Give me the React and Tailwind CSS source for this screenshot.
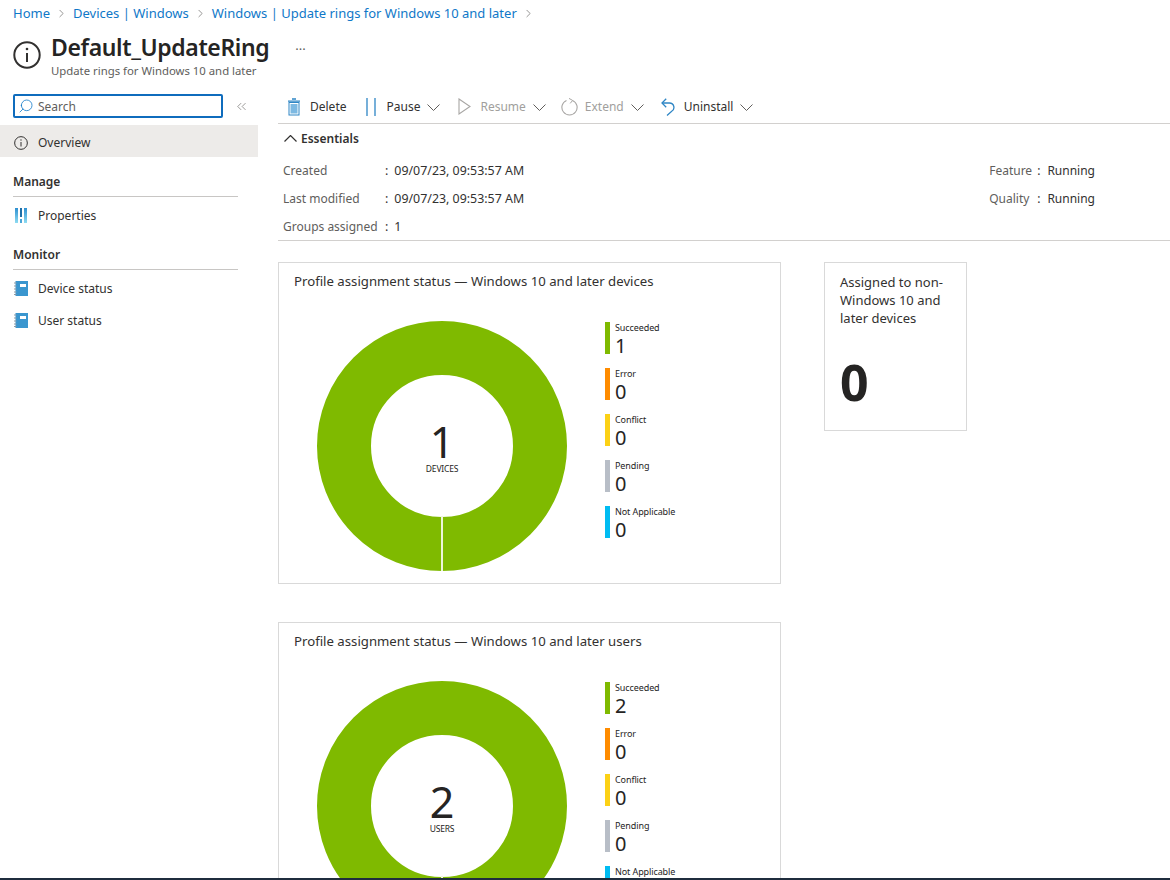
import { ChevronRight, ChevronsLeft, Search } from 'lucide-react';

const crumbs = ['Home', 'Devices | Windows', 'Windows | Update rings for Windows 10 and later'];

function InfoIcon({ size }) {
  return (
    <svg width={size} height={size} viewBox="0 0 28 28" fill="none" stroke="#323130" className="shrink-0">
      <circle cx="14" cy="14" r="12.7" strokeWidth="2" />
      <path d="M14 12v9" strokeWidth="2" />
      <circle cx="14" cy="8" r="1.3" fill="#323130" stroke="none" />
    </svg>
  );
}

function TrashIcon() {
  return (
    <svg width="14" height="18" viewBox="0 0 14 18" className="shrink-0">
      <path d="M5 1h4M1 3.2h12" stroke="#2f86c5" strokeWidth="1.3" fill="none" />
      <rect x="2" y="4.5" width="10" height="12.5" fill="#fff" stroke="#2f86c5" />
      <rect x="3.5" y="6" width="7" height="9.5" fill="#7db9e2" />
    </svg>
  );
}

function PauseIcon() {
  return (
    <svg width="10" height="18" viewBox="0 0 10 18" className="shrink-0">
      <path d="M1 0v18M9 0v18" stroke="#2f86c5" strokeWidth="1.3" />
    </svg>
  );
}

function ResumeIcon() {
  return (
    <svg width="13" height="17" viewBox="0 0 13 17" fill="none" className="shrink-0">
      <path d="M1 1l11 7.5L1 16z" stroke="#a8a6a4" strokeWidth="1.1" />
    </svg>
  );
}

function ExtendIcon() {
  return (
    <svg width="17" height="18" viewBox="0 0 17 18" fill="none" className="shrink-0">
      <path d="M11.5 2.4a7.6 7.6 0 1 1-6 0" stroke="#a8a6a4" strokeWidth="1.1" />
      <path d="M8 0.4l3.6 2-2.4 3" stroke="#a8a6a4" strokeWidth="1" />
    </svg>
  );
}

function UninstallIcon() {
  return (
    <svg width="14" height="18" viewBox="0 0 14 18" fill="none" className="shrink-0">
      <path d="M1 5h7.5a4.4 4.4 0 0 1 2.2 8.2L6 17.4" stroke="#2f86c5" strokeWidth="1.3" />
      <path d="M5.2 0.8L1 5l4.2 4.2" stroke="#2f86c5" strokeWidth="1.3" />
    </svg>
  );
}

function PropertiesIcon() {
  return (
    <svg width="12" height="15" viewBox="0 0 12 15" className="shrink-0">
      <defs>
        <linearGradient id="prop-bar" x1="0" y1="0" x2="0" y2="1">
          <stop offset="0" stopColor="#2d8fd0" />
          <stop offset="1" stopColor="#8fdcf2" />
        </linearGradient>
      </defs>
      <rect x="0" y="0" width="3" height="15" fill="url(#prop-bar)" />
      <rect x="5" y="0" width="2" height="9" fill="#1f6fa8" />
      <rect x="5" y="11" width="2" height="4" fill="#4aa6d8" />
      <rect x="9" y="0" width="3" height="15" fill="url(#prop-bar)" />
    </svg>
  );
}

function BookIcon() {
  return (
    <svg width="14" height="15" viewBox="0 0 14 15" className="shrink-0">
      <rect x="1.5" y="0" width="12.5" height="15" fill="#3a96cf" />
      <rect x="6" y="3" width="6" height="3" fill="#ffffff" />
      <path d="M0 2h2.5M0 5h2.5M0 8h2.5M0 11h2.5M0 13.5h2.5" stroke="#8a98a3" strokeWidth="1" />
    </svg>
  );
}

function DownChevron() {
  return (
    <svg width="13" height="7" viewBox="0 0 13 7" fill="none" className="ml-[7px] mt-[2px] shrink-0">
      <path d="M0.5 0.5l6 6 6-6" stroke="#605e5c" strokeWidth="1" />
    </svg>
  );
}

function UpChevron() {
  return (
    <svg width="13" height="7" viewBox="0 0 13 7" fill="none" className="shrink-0">
      <path d="M0.5 6.5l6-6 6 6" stroke="#323130" strokeWidth="1.2" />
    </svg>
  );
}

function ToolButton({ icon, label, disabled, chevron, className }) {
  return (
    <div className={`flex items-center ${className}`}>
      {icon}
      <span className={`ml-[var(--gap)] ${disabled ? 'text-[#a19f9d]' : 'text-[#323130]'}`}>{label}</span>
      {chevron && <DownChevron />}
    </div>
  );
}

function NavItem({ icon, label }) {
  return (
    <div className="flex items-center h-[32px] pl-[14px] pt-[3px] gap-[11px] text-[#323130]">
      <span className="w-[13px] flex justify-center">{icon}</span>
      <span>{label}</span>
    </div>
  );
}

function Donut() {
  return (
    <svg width="250" height="250" viewBox="0 0 250 250" className="block">
      <circle cx="125" cy="125" r="98" fill="none" stroke="#7fba00" strokeWidth="54" />
      <rect x="124" y="195" width="2" height="55" fill="#eef5da" />
    </svg>
  );
}

function StatusCard({ title, total, unit, succeeded, className }) {
  const legend = [
    ['Succeeded', succeeded, 'bg-[#7fba00]'],
    ['Error', 0, 'bg-[#ff8c00]'],
    ['Conflict', 0, 'bg-[#fcd116]'],
    ['Pending', 0, 'bg-[#b8bec7]'],
    ['Not Applicable', 0, 'bg-[#00bcf2]'],
  ];
  return (
    <div className={`w-[503px] h-[322px] border border-[#d9d9d9] shrink-0 pl-[15px] pt-[9px] ${className}`}>
      <div className="text-[13.2px] text-[#323130] leading-[18px]">{title}</div>
      <div className="flex mt-[31px] pl-[23px]">
        <div className="relative w-[250px] h-[250px] shrink-0">
          <Donut />
          <div className="absolute left-0 right-0 top-[100px] flex flex-col items-center text-[#252423]">
            <span className="text-[43px] leading-[42px]">{total}</span>
            <span className="text-[8.5px] leading-[12px] tracking-[-0.2px]">{unit}</span>
          </div>
        </div>
        <div className="ml-[38px] flex flex-col gap-[14px] pt-[1px]">
          {legend.map(([name, value, color]) => (
            <div key={name} className="flex h-[32px]">
              <div className={`w-[5px] ${color}`} />
              <div className="ml-[5px] flex flex-col text-[#252423]">
                <span className="text-[9px] leading-[11px] tracking-[-0.1px] whitespace-nowrap">{name}</span>
                <span className="text-[20px] leading-[20px] mt-[3px]">{value}</span>
              </div>
            </div>
          ))}
        </div>
      </div>
    </div>
  );
}

export default function App() {
  return (
    <div className="relative w-[1170px] h-[880px] overflow-hidden bg-white text-[12px] font-['Noto_Sans','Open_Sans',sans-serif]">
      <div className="flex items-center h-[27px] pl-[13px] text-[13px] text-[#0f78c8]">
        {crumbs.map((c) => (
          <div key={c} className="flex items-center">
            <span>{c}</span>
            <ChevronRight size={13} strokeWidth={1.2} className="mx-[5px] text-[#605e5c]" />
          </div>
        ))}
      </div>

      <div className="flex items-start pl-[13px] h-[67px]">
        <div className="mt-[14px]"><InfoIcon size={28} /></div>
        <div className="ml-[10px]">
          <div className="flex items-start">
            <h1 className="text-[23px] leading-[40px] font-semibold text-[#252423] tracking-[-0.38px]">Default_UpdateRing</h1>
            <span className="ml-[26px] mt-[11px] text-[13px] text-[#605e5c] leading-[14px]">...</span>
          </div>
          <div className="text-[11.35px] leading-[14px] -mt-[3px] text-[#605e5c]">Update rings for Windows 10 and later</div>
        </div>
      </div>

      <div className="flex">
        <aside className="w-[258px] shrink-0">
          <div className="flex items-center pl-[13px] h-[24px]">
            <div className="flex items-center w-[210px] h-[24px] border-2 border-[#0f6cbd] rounded-[2px] pl-[3px]">
              <Search size={16} strokeWidth={1.2} className="text-[#0f78c8] -scale-x-100" />
              <span className="ml-[4px] pt-[1px] text-[#605e5c]">Search</span>
            </div>
            <ChevronsLeft size={15} strokeWidth={1} className="ml-[11px] text-[#605e5c]" />
          </div>
          <div className="mt-[7px] bg-[#edebe9]">
            <NavItem icon={<InfoIcon size={14} />} label="Overview" />
          </div>
          <div className="mx-[13px] w-[225px] mt-[15px] h-[25px] pt-[1px] border-b border-[#c8c6c4] font-semibold text-[#323130]">Manage</div>
          <div className="mt-[1px]"><NavItem icon={<PropertiesIcon />} label="Properties" /></div>
          <div className="mx-[13px] w-[225px] mt-[15px] h-[25px] pt-[1px] border-b border-[#c8c6c4] font-semibold text-[#323130]">Monitor</div>
          <div className="mt-[1px]"><NavItem icon={<BookIcon />} label="Device status" /></div>
          <NavItem icon={<BookIcon />} label="User status" />
        </aside>

        <main className="flex-1 pl-[20px] min-w-0">
          <div className="flex items-center h-[30px] pb-[4px] border-b border-[#d2d0ce]">
            <ToolButton className="ml-[9px] [--gap:9px]" icon={<TrashIcon />} label="Delete" />
            <ToolButton className="ml-[19px] [--gap:11px]" icon={<PauseIcon />} label="Pause" chevron />
            <ToolButton className="ml-[18px] [--gap:9px]" icon={<ResumeIcon />} label="Resume" disabled chevron />
            <ToolButton className="ml-[15px] [--gap:7px]" icon={<ExtendIcon />} label="Extend" disabled chevron />
            <ToolButton className="ml-[17px] [--gap:9px]" icon={<UninstallIcon />} label="Uninstall" chevron />
          </div>

          <div className="h-[117px] border-b border-[#d2d0ce] text-[#605e5c]">
            <div className="flex items-center h-[29px] pl-[6px] gap-[4px] font-semibold text-[#323130]">
              <UpChevron />
              <span>Essentials</span>
            </div>
            <div className="flex justify-between pt-[4px] pl-[5px] pr-[75px]">
              <div className="grid grid-cols-[102px_auto] auto-rows-[28px] items-center">
                <span>Created</span>
                <span className="text-[12.4px] text-[#323130]"><span className="mr-[6px]">:</span>09/07/23, 09:53:57 AM</span>
                <span>Last modified</span>
                <span className="text-[12.4px] text-[#323130]"><span className="mr-[6px]">:</span>09/07/23, 09:53:57 AM</span>
                <span>Groups assigned</span>
                <span className="text-[12.4px] text-[#323130]"><span className="mr-[6px]">:</span>1</span>
              </div>
              <div className="grid grid-cols-[43px_auto] auto-rows-[28px] items-center self-start">
                <span>Feature</span>
                <span className="text-[#323130]"><span className="ml-[5px] mr-[7px]">:</span>Running</span>
                <span>Quality</span>
                <span className="text-[#323130]"><span className="ml-[5px] mr-[7px]">:</span>Running</span>
              </div>
            </div>
          </div>

          <div className="flex items-start mt-[21px]">
            <StatusCard title="Profile assignment status — Windows 10 and later devices" total={1} unit="DEVICES" succeeded={1} />
            <div className="ml-[43px] w-[143px] h-[169px] border border-[#d9d9d9] pl-[15px] pr-[15px] pt-[10px] shrink-0">
              <div className="text-[13px] leading-[18px] text-[#323130]">Assigned to non-Windows 10 and later devices</div>
              <div className="mt-[25px] text-[50px] leading-[60px] font-bold text-[#252423]">0</div>
            </div>
          </div>
          <StatusCard className="mt-[38px]" title="Profile assignment status — Windows 10 and later users" total={2} unit="USERS" succeeded={2} />
        </main>
      </div>

      <div className="absolute left-0 right-0 bottom-0 h-[2px] bg-[#1f2d3d]" />
    </div>
  );
}
